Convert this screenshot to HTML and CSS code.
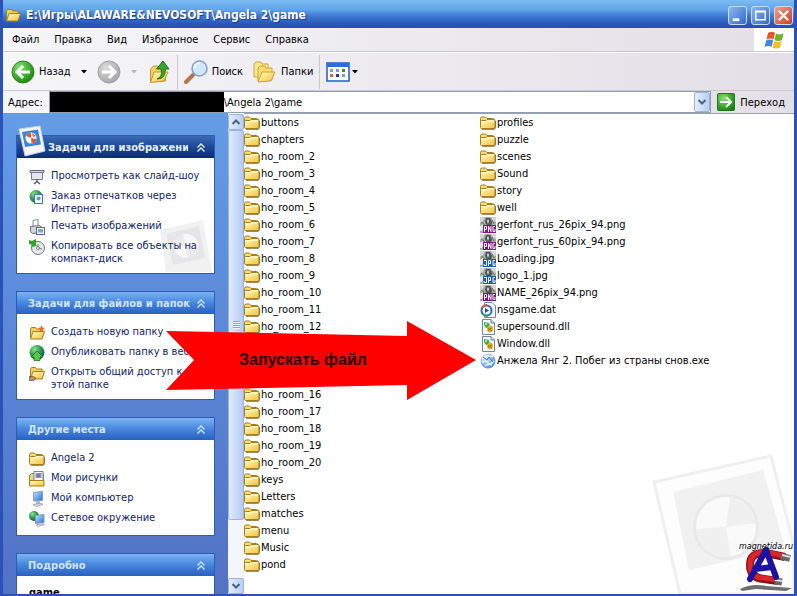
FILE: index.html
```
<!DOCTYPE html>
<html lang="ru">
<head>
  <meta charset="UTF-8">
  <title>E:\Игры\ALAWARE&amp;NEVOSOFT\Angela 2\game</title>
  <link rel="stylesheet" href="styles.css">
</head>
<body>
  <!-- shared icons -->
  <svg class="sprite" aria-hidden="true">
    <defs>
      <linearGradient id="gFolder" x1="0" y1="0" x2="1" y2="1">
        <stop offset="0" stop-color="#fffbc0"/><stop offset="1" stop-color="#efc33c"/>
      </linearGradient>
      <linearGradient id="gScreen" x1="0" y1="0" x2="1" y2="1">
        <stop offset="0" stop-color="#bfe6ff"/><stop offset="1" stop-color="#1e6fd6"/>
      </linearGradient>
      <radialGradient id="gGlobe" cx="0.35" cy="0.3" r="0.8">
        <stop offset="0" stop-color="#8fe08a"/><stop offset="0.5" stop-color="#2b9a4a"/><stop offset="1" stop-color="#0c4a7a"/>
      </radialGradient>
      <radialGradient id="gGreen" cx="0.35" cy="0.3" r="0.8">
        <stop offset="0" stop-color="#8be07a"/><stop offset="0.6" stop-color="#36a828"/><stop offset="1" stop-color="#1b7a14"/>
      </radialGradient>
      <radialGradient id="gGray" cx="0.35" cy="0.3" r="0.8">
        <stop offset="0" stop-color="#dcdcdc"/><stop offset="1" stop-color="#a2a2a2"/>
      </radialGradient>
      <radialGradient id="gBall" cx="0.35" cy="0.3" r="0.8">
        <stop offset="0" stop-color="#e4f4ff"/><stop offset="1" stop-color="#3f83dc"/>
      </radialGradient>
    </defs>
    <symbol id="folder" viewBox="0 0 16 16">
      <path d="M.5 12V3.500q0-1.500 1.500-1.500h3.500l1.500 1.500h5.500q1.500 0 1.500 1.500v7" fill="#f7dc74" stroke="#a87d1c"/>
      <path d="M1.500 13.500q-1 0-1-1V6.500q0-1 1-1H6l1-1h7q1 0 1 1v6.500q0 1.500-1 1.500z" fill="url(#gFolder)" stroke="#a87d1c"/>
      <path d="M2 7h4.500l1-1H14" fill="none" stroke="#fffde0"/>
      <path d="M2 14.500h12q1.500-.5 1.500-2V6" fill="none" stroke="#7a5a14" stroke-opacity=".7"/>
    </symbol>
    <symbol id="folder-open" viewBox="0 0 16 16">
      <path d="M1.500 13.500V4l1-1.500h4l1 1.500h5.500v9.500z" fill="#f3d262" stroke="#a87d1c"/>
      <path d="M1.500 14l2.500-7.500h11.500l-2.500 7.500z" fill="url(#gFolder)" stroke="#a87d1c"/>
    </symbol>
    <symbol id="folder-new" viewBox="0 0 16 16">
      <use href="#folder-open"/>
      <path d="M12.500 0l1 2.500 2.500.5-2 1.500.5 2.500-2-1.500-2 1.500.5-2.500-2-1.500 2.500-.5z" fill="#f0682a"/>
    </symbol>
    <symbol id="folder-share" viewBox="0 0 16 16">
      <use href="#folder-open"/>
      <path d="M0 11.500h4l3 1.500-2 2.500H0z" fill="#c98a5a" stroke="#5a4a4a" stroke-width=".6"/>
    </symbol>
    <symbol id="photo-file" viewBox="0 0 16 16">
      <rect width="16" height="16" fill="#a9aaa8"/>
      <path d="M0 0h5l-2 4-3 2zM11 0h5v5l-3-1z" fill="#d4d6d2"/>
      <path d="M6 1h4l2 4-1 4H7L5 5z" fill="#4d5252"/>
      <path d="M8 2l1 2-1 3-1-3zM0 9l3-2 1 3-2 4H0z" fill="#e6e8e4"/>
      <path d="M1 5l3 2v3M12 3l2 4" stroke="#6b706c" fill="none"/>
    </symbol>
    <symbol id="png" viewBox="0 0 16 16">
      <use href="#photo-file"/>
      <rect x="3" y="8" width="13" height="8" fill="#84128c"/>
      <path d="M4.500 15V9.500h2v3h-2M8.500 15V9.500l2.500 5V9M15 9.500h-2v5h2V12" fill="none" stroke="#fff"/>
    </symbol>
    <symbol id="jpg" viewBox="0 0 16 16">
      <use href="#photo-file"/>
      <rect x="3" y="8" width="13" height="8" fill="#1260b4"/>
      <path d="M4 9.500h2.500v5H4V13M8.500 15V9.500h2v3h-2M15 9.500h-2v5h2V12" fill="none" stroke="#fff"/>
    </symbol>
    <symbol id="dat" viewBox="0 0 16 16">
      <path d="M4.500.5H12l3.500 3.500v11.500h-11z" fill="#f4f7fc" stroke="#6d86ac"/>
      <circle cx="6.500" cy="8.500" r="5" fill="#fff" stroke="#2b67c8" stroke-width="2"/>
      <path d="M2 6a5 5 0 0 1 5-3" fill="none" stroke="#e05a2a" stroke-width="2"/>
      <path d="M3 12a5 5 0 0 0 5 1.500" fill="none" stroke="#3fa83a" stroke-width="2"/>
      <path d="M5 6l4 2.500L5 11z" fill="#1a4fa8"/>
    </symbol>
    <symbol id="dll" viewBox="0 0 16 16">
      <path d="M2.500.5H11l3.500 3.500v11.500h-12z" fill="#f6f9ff" stroke="#6d86ac"/>
      <path d="M11 .5V4h3.500" fill="#c8d6ee" stroke="#6d86ac"/>
      <path d="M4 3l5 1 1 4-4 1-2-3z" fill="#3fae4a"/>
      <circle cx="6" cy="5" r="1" fill="#c8f0b8"/>
      <ellipse cx="10" cy="10" rx="3" ry="3.500" fill="#e2b126"/>
      <path d="M8 9l4 3M8 11.500l4-3" stroke="#8a6a14" stroke-width=".8"/>
    </symbol>
    <symbol id="exe" viewBox="0 0 16 16">
      <circle cx="8" cy="8" r="7.500" fill="url(#gBall)"/>
      <path d="M2 6q3-4 6-3t5 0M2 9q4-2 6 1t6-2M5 13q3-3 7-1" fill="none" stroke="#fff" stroke-width="1.500" stroke-opacity=".8"/>
      <path d="M3 4l4 3 2-3 4 5" fill="none" stroke="#2f76cf"/>
    </symbol>
    <symbol id="slideshow" viewBox="0 0 16 16">
      <path d="M1 1.500h14v2H1z" fill="#d4d4de" stroke="#6a6a80"/>
      <path d="M2.500 3.500h11v7h-11z" fill="#e4e6f2" stroke="#7a7a90"/>
      <path d="M8 10v3M5 15l3-2.500L11 15" fill="none" stroke="#5c5c70" stroke-width="1.500"/>
    </symbol>
    <symbol id="globe-print" viewBox="0 0 16 16">
      <circle cx="7" cy="7.500" r="6.500" fill="url(#gGlobe)"/>
      <rect x="5.500" y="5.500" width="8" height="9" fill="#f4f8ff" stroke="#4a78b4"/>
      <circle cx="9.500" cy="9.500" r="2" fill="#5a98dc"/>
    </symbol>
    <symbol id="printer" viewBox="0 0 16 16">
      <path d="M4 7V1.500l5-1V7" fill="#fff" stroke="#7f8ba0"/>
      <path d="M1.500 7.500l9-1 2 2v5l-9 1-2-2z" fill="#d0d6de" stroke="#66708a"/>
      <rect x="7.500" y="8.500" width="8" height="7" fill="#fff" stroke="#4a6ea8"/>
      <rect x="9" y="10" width="5" height="3.500" fill="#76a8dc"/>
    </symbol>
    <symbol id="cd-copy" viewBox="0 0 16 16">
      <circle cx="9" cy="9" r="6.500" fill="#e3e7ea" stroke="#74787c"/>
      <path d="M9 9V5M9 9l4 1" stroke="#74787c"/>
      <circle cx="9" cy="9" r="1.500" fill="#fff" stroke="#74787c"/>
      <path d="M0 1l3 1 4-2v6l1 1-6 1 1-2-3-1z" fill="#2fa82a"/>
    </symbol>
    <symbol id="publish" viewBox="0 0 16 16">
      <circle cx="8" cy="7.500" r="7.500" fill="url(#gGlobe)"/>
      <path d="M8 6l6 6h-3v3.500H5V12H2z" fill="#57c84a" stroke="#166016" stroke-width=".7"/>
    </symbol>
    <symbol id="my-pics" viewBox="0 0 16 16">
      <path d="M.5 14.500V4.500l2-2h12v12z" fill="#f5d56a" stroke="#a87d1c"/>
      <rect x="5" y=".5" width="9" height="9" fill="#fff" stroke="#6a88b8"/>
      <rect x="6.500" y="2" width="6" height="5" fill="#62a4ea"/>
      <circle cx="9.500" cy="4.500" r="1.500" fill="#e0522a"/>
      <path d="M.5 9.500h14.500v5.500H.5z" fill="url(#gFolder)" stroke="#a87d1c"/>
    </symbol>
    <symbol id="computer" viewBox="0 0 16 16">
      <path d="M4.500 1.500l9-1v9l-9 .5z" fill="url(#gScreen)" stroke="#8a9ab8"/>
      <path d="M7 10h4v3H7z" fill="#b4bccc"/>
      <path d="M4 13.500l8-1 2 1-7 2z" fill="#dde2ec" stroke="#8a94a8" stroke-width=".7"/>
    </symbol>
    <symbol id="network" viewBox="0 0 16 16">
      <circle cx="5" cy="5" r="5" fill="url(#gGlobe)"/>
      <path d="M6.500 4.500l8.500-1v8l-8.500 1z" fill="url(#gScreen)" stroke="#8a9ab8"/>
      <path d="M7 14l7-1.500 1.500 1-6 2z" fill="#dde2ec" stroke="#8a94a8" stroke-width=".7"/>
    </symbol>
    <symbol id="chevrons" viewBox="0 0 10 10">
      <path d="M1.500 4.500L5 1l3.500 3.500M1.500 8.500L5 5l3.500 3.500" fill="none" stroke="currentColor" stroke-width="1.300"/>
    </symbol>
    <symbol id="chev-up" viewBox="0 0 10 10">
      <path d="M1.500 7L5 3.500 8.500 7" fill="none" stroke="#4d6185" stroke-width="2"/>
    </symbol>
    <symbol id="chev-down" viewBox="0 0 10 10">
      <path d="M1.500 3L5 6.500 8.500 3" fill="none" stroke="#4d6185" stroke-width="2"/>
    </symbol>
  </svg>

  <div class="window">
    <header class="titlebar">
      <svg class="icon"><use href="#folder-open"/></svg>
      <h1>E:\Игры\ALAWARE&amp;NEVOSOFT\Angela 2\game</h1>
      <div class="window-buttons">
        <button type="button" aria-label="Свернуть">
          <svg viewBox="0 0 18 18"><path d="M4 12h7v3H4z" fill="#fff"/></svg>
        </button>
        <button type="button" aria-label="Развернуть">
          <svg viewBox="0 0 18 18"><path d="M4 4.500h10v9H4zM3.500 5h11" fill="none" stroke="#fff" stroke-width="1.500"/></svg>
        </button>
        <button type="button" class="close" aria-label="Закрыть">
          <svg viewBox="0 0 18 18"><path d="M4 4l10 10M14 4L4 14" stroke="#fff" stroke-width="2.200"/></svg>
        </button>
      </div>
    </header>

    <nav class="menubar">
      <button type="button">Файл</button>
      <button type="button">Правка</button>
      <button type="button">Вид</button>
      <button type="button">Избранное</button>
      <button type="button">Сервис</button>
      <button type="button">Справка</button>
      <div class="flag">
        <svg viewBox="0 0 20 18">
          <path d="M4 2q4-2.500 7 0L9.500 8.500q-3-2-7 0z" fill="#e8542a"/>
          <path d="M12 2.500q3 2 7.500 0L18 9q-4 2-7.500 0z" fill="#6cb42c"/>
          <path d="M2.200 9.500q4-2 7 0L7.500 16q-3-2-7 0z" fill="#3f86dc"/>
          <path d="M10.200 10q3 2 7.500 0L16 16.500q-4 2-7.500 0z" fill="#f4bd20"/>
        </svg>
      </div>
    </nav>

    <div class="toolbar">
      <button type="button">
        <svg class="big" viewBox="0 0 24 24">
          <circle cx="12" cy="12" r="11" fill="url(#gGreen)" stroke="#2a8a20"/>
          <path d="M19 12H7M12 6l-6 6 6 6" fill="none" stroke="#fff" stroke-width="3"/>
        </svg>
        Назад
      </button>
      <button type="button" class="drop" aria-label="Журнал назад"><svg viewBox="0 0 6 4"><path d="M0 0h6L3 3.500z"/></svg></button>
      <button type="button" aria-label="Вперёд">
        <svg class="big" viewBox="0 0 24 24">
          <circle cx="12" cy="12" r="11" fill="url(#gGray)" stroke="#a0a0a0"/>
          <path d="M5 12h12M12 6l6 6-6 6" fill="none" stroke="#fff" stroke-width="3"/>
        </svg>
      </button>
      <button type="button" class="drop dim" aria-label="Журнал вперёд"><svg viewBox="0 0 6 4"><path d="M0 0h6L3 3.500z"/></svg></button>
      <button type="button" aria-label="Вверх">
        <svg class="big" viewBox="0 0 24 24">
          <path d="M3.500 22V9l3-3h4l2 2h6v13z" fill="#f3d262" stroke="#c49a2c"/>
          <path d="M3.500 22.500L7 12h14l-4 9z" fill="url(#gFolder)" stroke="#c49a2c"/>
          <path d="M10 19q6-2 4-10H9.500L16 1l6 8h-4q1 10-8 10z" fill="#3aa432" stroke="#1c7016"/>
        </svg>
      </button>
      <span class="divider"></span>
      <button type="button">
        <svg class="big" viewBox="0 0 24 24">
          <path d="M9 15l-7 7" stroke="#b8764a" stroke-width="4" stroke-linecap="round"/>
          <circle cx="15.500" cy="8.500" r="7.500" fill="#cfe9fb" stroke="#7f9fcb" stroke-width="1.500"/>
          <path d="M10.500 8a5 5 0 0 1 5-5" fill="none" stroke="#fff" stroke-width="2"/>
        </svg>
        Поиск
      </button>
      <button type="button" class="folders">
        <svg class="big" viewBox="0 0 24 24">
          <path d="M1 17V4l2-2h5l1 2h6v13z" fill="#fbe68e" stroke="#cfa334"/>
          <path d="M5 21V8l2-2h5l1 2h6v12z" fill="#f8dc74" stroke="#cfa334"/>
          <path d="M5 22l4-10h13l-4 9z" fill="url(#gFolder)" stroke="#cfa334"/>
        </svg>
        Папки
      </button>
      <span class="divider"></span>
      <button type="button" class="views" aria-label="Вид">
        <svg class="big" viewBox="0 0 24 20">
          <path d="M1 1h22v18H1z" fill="#fff" stroke="#1c5cc4" stroke-width="1.500"/>
          <path d="M1 1h22v4H1z" fill="#2a70dc"/>
          <path d="M4 7h3v3H4zM16 12h3v3h-3z" fill="#8a98b0"/>
          <path d="M10 7h3v3h-3z" fill="#7c9cd0"/>
          <path d="M16 7h3v3h-3z" fill="#2c9a34"/>
          <path d="M4 12h3v3H4z" fill="#dc6a34"/>
          <path d="M10 12h3v3h-3z" fill="#1c3ca0"/>
        </svg>
        <svg class="caret" viewBox="0 0 6 4"><path d="M0 0h6L3 3.500z"/></svg>
      </button>
    </div>

    <form class="address">
      <label for="path">Адрес:</label>
      <div class="combo">
        <span class="mask"></span>
        <input type="text" id="path" value="\Angela 2\game">
        <button type="button" class="scroll-btn" aria-label="Список адресов"><svg><use href="#chev-down"/></svg></button>
      </div>
      <button type="button" class="go">
        <svg viewBox="0 0 18 18">
          <rect x=".5" y=".5" width="17" height="17" rx="1" fill="url(#gGreen)" stroke="#1d7a1a"/>
          <path d="M3 9h10M9 4l5 5-5 5" fill="none" stroke="#fff" stroke-width="2"/>
        </svg>
        Переход
      </button>
    </form>

    <main class="content">
      <aside class="sidebar">
        <section class="panel primary">
          <svg class="polaroid" viewBox="0 0 28 32">
            <path d="M1 4l21-3 5 25-20 5z" fill="#f4f6fa" stroke="#c8d0e0"/>
            <path d="M4 7l16-2.500 3 15L7 22z" fill="#3a86d4"/>
            <circle cx="13" cy="13" r="5.500" fill="#fff"/>
            <path d="M13 13l-5-2a5.500 5.500 0 0 1 5-3.500zM13 13l5.500 1a5.500 5.500 0 0 1-5 4.500zM14 8l4 3-3 1z" fill="#e25a34"/>
          </svg>
          <h2><span>Задачи для изображений</span><svg><use href="#chevrons"/></svg></h2>
          <ul>
            <li><svg class="icon"><use href="#slideshow"/></svg><a href="#">Просмотреть как слайд-шоу</a></li>
            <li><svg class="icon"><use href="#globe-print"/></svg><a href="#">Заказ отпечатков через Интернет</a></li>
            <li><svg class="icon"><use href="#printer"/></svg><a href="#">Печать изображений</a></li>
            <li><svg class="icon"><use href="#cd-copy"/></svg><a href="#">Копировать все объекты на компакт-диск</a></li>
          </ul>
          <svg class="ghost" viewBox="0 0 54 54">
            <path d="M1 11L44 1l9 52H7z" fill="#f1f1f2"/>
            <path d="M7 15l33-8 6 32-32 7z" fill="#e6e6e8"/>
            <circle cx="27" cy="27" r="12" fill="#f8f8f9"/>
            <path d="M27 27l-12-1a12 12 0 0 1 9-11zM27 27l12 2a12 12 0 0 1-10 10z" fill="#eaeaec"/>
          </svg>
        </section>

        <section class="panel">
          <h2><span>Задачи для файлов и папок</span><svg><use href="#chevrons"/></svg></h2>
          <ul>
            <li><svg class="icon"><use href="#folder-new"/></svg><a href="#">Создать новую папку</a></li>
            <li><svg class="icon"><use href="#publish"/></svg><a href="#">Опубликовать папку в вебе</a></li>
            <li><svg class="icon"><use href="#folder-share"/></svg><a href="#">Открыть общий доступ к этой папке</a></li>
          </ul>
        </section>

        <section class="panel">
          <h2><span>Другие места</span><svg><use href="#chevrons"/></svg></h2>
          <ul>
            <li><svg class="icon"><use href="#folder"/></svg><a href="#">Angela 2</a></li>
            <li><svg class="icon"><use href="#my-pics"/></svg><a href="#">Мои рисунки</a></li>
            <li><svg class="icon"><use href="#computer"/></svg><a href="#">Мой компьютер</a></li>
            <li><svg class="icon"><use href="#network"/></svg><a href="#">Сетевое окружение</a></li>
          </ul>
        </section>

        <section class="panel">
          <h2><span>Подробно</span><svg><use href="#chevrons"/></svg></h2>
          <p class="details">game</p>
        </section>
      </aside>

      <div class="scrollbar">
        <button type="button" class="scroll-btn" aria-label="Вверх"><svg><use href="#chev-up"/></svg></button>
        <div class="track"><div class="thumb"><span class="grip"></span></div></div>
        <button type="button" class="scroll-btn" aria-label="Вниз"><svg><use href="#chev-down"/></svg></button>
      </div>

      <div class="files">
        <ul>
          <li><svg class="icon"><use href="#folder"/></svg>buttons</li>
          <li><svg class="icon"><use href="#folder"/></svg>chapters</li>
          <li><svg class="icon"><use href="#folder"/></svg>ho_room_2</li>
          <li><svg class="icon"><use href="#folder"/></svg>ho_room_3</li>
          <li><svg class="icon"><use href="#folder"/></svg>ho_room_4</li>
          <li><svg class="icon"><use href="#folder"/></svg>ho_room_5</li>
          <li><svg class="icon"><use href="#folder"/></svg>ho_room_6</li>
          <li><svg class="icon"><use href="#folder"/></svg>ho_room_7</li>
          <li><svg class="icon"><use href="#folder"/></svg>ho_room_8</li>
          <li><svg class="icon"><use href="#folder"/></svg>ho_room_9</li>
          <li><svg class="icon"><use href="#folder"/></svg>ho_room_10</li>
          <li><svg class="icon"><use href="#folder"/></svg>ho_room_11</li>
          <li><svg class="icon"><use href="#folder"/></svg>ho_room_12</li>
          <li><svg class="icon"><use href="#folder"/></svg>ho_room_13</li>
          <li><svg class="icon"><use href="#folder"/></svg>ho_room_14</li>
          <li><svg class="icon"><use href="#folder"/></svg>ho_room_15</li>
          <li><svg class="icon"><use href="#folder"/></svg>ho_room_16</li>
          <li><svg class="icon"><use href="#folder"/></svg>ho_room_17</li>
          <li><svg class="icon"><use href="#folder"/></svg>ho_room_18</li>
          <li><svg class="icon"><use href="#folder"/></svg>ho_room_19</li>
          <li><svg class="icon"><use href="#folder"/></svg>ho_room_20</li>
          <li><svg class="icon"><use href="#folder"/></svg>keys</li>
          <li><svg class="icon"><use href="#folder"/></svg>Letters</li>
          <li><svg class="icon"><use href="#folder"/></svg>matches</li>
          <li><svg class="icon"><use href="#folder"/></svg>menu</li>
          <li><svg class="icon"><use href="#folder"/></svg>Music</li>
          <li><svg class="icon"><use href="#folder"/></svg>pond</li>
        </ul>
        <ul>
          <li><svg class="icon"><use href="#folder"/></svg>profiles</li>
          <li><svg class="icon"><use href="#folder"/></svg>puzzle</li>
          <li><svg class="icon"><use href="#folder"/></svg>scenes</li>
          <li><svg class="icon"><use href="#folder"/></svg>Sound</li>
          <li><svg class="icon"><use href="#folder"/></svg>story</li>
          <li><svg class="icon"><use href="#folder"/></svg>well</li>
          <li><svg class="icon"><use href="#png"/></svg>gerfont_rus_26pix_94.png</li>
          <li><svg class="icon"><use href="#png"/></svg>gerfont_rus_60pix_94.png</li>
          <li><svg class="icon"><use href="#jpg"/></svg>Loading.jpg</li>
          <li><svg class="icon"><use href="#jpg"/></svg>logo_1.jpg</li>
          <li><svg class="icon"><use href="#png"/></svg>NAME_26pix_94.png</li>
          <li><svg class="icon"><use href="#dat"/></svg>nsgame.dat</li>
          <li><svg class="icon"><use href="#dll"/></svg>supersound.dll</li>
          <li><svg class="icon"><use href="#dll"/></svg>Window.dll</li>
          <li><svg class="icon"><use href="#exe"/></svg>Анжела Янг 2. Побег из страны снов.exe</li>
        </ul>

        <svg class="watermark" viewBox="0 0 142 140">
          <path d="M2 28L119 2l23 90v48H28z" fill="#fdfdfd" stroke="#efefef" stroke-width="3"/>
          <path d="M21 38l90-22 22 78-96 22z" fill="#f1f1f1"/>
          <circle cx="74" cy="73" r="33" fill="#e9e9e9"/>
          <circle cx="74" cy="73" r="30" fill="#fafafa"/>
          <path d="M74 73l-30 2a30 30 0 0 0 35 28zM74 73l4-30a30 30 0 0 1 26 26z" fill="#f0f0f0"/>
        </svg>
        <svg class="magnet" viewBox="0 0 54 50">
          <path d="M0 45q12-6 26-3l26 2-6 3-30-2-14 2z" fill="#222" fill-opacity=".65"/>
          <path d="M45 13L26 9Q10 8 10 21t14 14l14 2" fill="none" stroke="#8c1016" stroke-width="8"/>
          <path d="M44 12L26 8Q10 8 10 21t14 13l13 2" fill="none" stroke="#d8262a" stroke-width="5"/>
          <path d="M41 12l9 2.500M35 37l7 1" stroke="#666" stroke-width="7"/>
          <path d="M42 11l8 2M35 36l7 1" stroke="#d8d8d8" stroke-width="2"/>
          <path d="M10 35L26 6l10 27M15 25l17-2" fill="none" stroke="#1c10a0" stroke-width="6" stroke-linecap="round" stroke-linejoin="round"/>
          <text x="53" y="5" text-anchor="end">magnetida.ru</text>
        </svg>
      </div>
    </main>

    <svg class="callout" viewBox="0 0 310 80">
      <path d="M0 10l241 5V0l69 39-69 40V64L0 69l28-30z" fill="#f00"/>
      <text x="73" y="44">Запускать файл</text>
    </svg>
  </div>
</body>
</html>
```
FILE: styles.css
```
* {
  box-sizing: border-box;
}

body {
  margin: 0;
  font-family: "DejaVu Sans Condensed", "Noto Sans", sans-serif;
  font-size: 11px;
  line-height: 13px;
  color: #000;
}

ul {
  list-style: none;
  margin: 0;
  padding: 0;
}

button {
  display: flex;
  align-items: center;
  padding: 0;
  border: 0;
  background: none;
  font: inherit;
  color: inherit;
}

svg {
  display: block;
  flex: none;
}

.sprite {
  position: absolute;
  width: 0;
  height: 0;
}

.icon {
  width: 16px;
  height: 16px;
}

.window {
  position: relative;
  display: flex;
  flex-direction: column;
  height: 100vh;
  overflow: hidden;
  border: solid #2a52b8;
  border-width: 0 3px 2px;
  background-color: #ece9ee;
}

/* title bar */
.titlebar {
  display: flex;
  align-items: center;
  gap: 5px;
  height: 28px;
  padding: 2px 4px 0 5px;
  margin: 0 -3px;
  background: linear-gradient(#7dbcf2, #60a4ea 35%, #3f7cd6 55%, #2a58b8 85%, #2450ae);
}

.titlebar h1 {
  flex: 1;
  margin: 0;
  font-size: 12px;
  line-height: 18px;
  color: #fff;
  text-shadow: 1px 1px 1px #1a3c88;
}

.window-buttons {
  display: flex;
  gap: 4px;
}

.window-buttons button {
  width: 19px;
  height: 19px;
  border: 1px solid #c8dcf8;
  border-radius: 3px;
  background: linear-gradient(135deg, #8ab8f0, #3468c8);
}

.window-buttons .close {
  background: linear-gradient(135deg, #f0a088, #d03c20);
}

/* menu */
.menubar {
  display: flex;
  align-items: center;
  gap: 15px;
  height: 24px;
  padding-left: 9px;
  background: linear-gradient(to right, #f6f5f8, #e2e0e6);
  border-bottom: 1px solid #c9c7cf;
}

.flag {
  display: flex;
  align-items: center;
  justify-content: center;
  width: 40px;
  height: 23px;
  margin-left: auto;
  background-color: #fff;
}

.flag svg {
  width: 20px;
  height: 18px;
}

/* toolbar */
.toolbar {
  display: flex;
  align-items: center;
  height: 39px;
  padding-left: 8px;
  background: linear-gradient(to right, #f6f5f8, #e2e0e6);
  border-top: 1px solid #fff;
  border-bottom: 1px solid #c9c7cf;
}

.toolbar button {
  gap: 4px;
}

.toolbar .big {
  width: 24px;
  height: 24px;
}

.toolbar .drop {
  justify-content: center;
  width: 26px;
}

.drop svg,
.caret {
  width: 6px;
  height: 4px;
}

.toolbar .dim {
  fill: #b8b8b8;
}

.toolbar .views {
  gap: 2px;
}

.divider {
  width: 1px;
  height: 34px;
  margin: 0 6px;
  background-color: #c9c7cf;
}

.folders {
  margin-left: 10px;
}

/* address */
.address {
  display: flex;
  align-items: center;
  gap: 6px;
  height: 22px;
  padding-left: 5px;
  background: linear-gradient(to right, #f6f5f8, #e2e0e6);
}

.combo {
  flex: 1;
  display: flex;
  height: 22px;
  background-color: #fff;
  border: 1px solid #8f9db5;
}

.mask {
  width: 174px;
  background-color: #000;
}

.combo input {
  flex: 1;
  min-width: 0;
  padding: 0;
  border: 0;
  outline: 0;
  font: inherit;
  background: none;
}

.scroll-btn {
  flex: none;
  justify-content: center;
  width: 16px;
  height: 16px;
  border: 1px solid #9cb4dc;
  border-radius: 2px;
  background: linear-gradient(to right, #e4eefc, #b8cff4);
}

.scroll-btn svg {
  width: 10px;
  height: 10px;
}

.combo .scroll-btn {
  height: 20px;
}

.go {
  gap: 5px;
  padding-right: 9px;
}

.go svg {
  width: 18px;
  height: 18px;
}

/* content */
.content {
  flex: 1;
  display: flex;
  min-height: 0;
  background-color: #fff;
}

.sidebar {
  display: flex;
  flex-direction: column;
  flex: none;
  gap: 17px;
  width: 225px;
  padding: 22px 13px 0;
  overflow: hidden;
  background: linear-gradient(#649ce6, #5a86d6 50%, #5272c4);
}

.panel {
  position: relative;
  flex: none;
  background-color: #fff;
  border: 1px solid #2c5cb4;
}

.panel h2 {
  display: flex;
  align-items: center;
  height: 22px;
  margin: 0;
  padding: 1px 8px 0 11px;
  font-size: 11px;
  color: #d0e4ff;
  background: linear-gradient(#7cb4f0, #4a8ae0 45%, #2860c0);
}

.panel h2 span {
  flex: 1;
  overflow: hidden;
  white-space: nowrap;
}

.panel h2 svg {
  width: 10px;
  height: 10px;
}

.panel.primary h2 {
  gap: 8px;
  padding-left: 31px;
  color: #e6f0ff;
  background: linear-gradient(#3a6cb4, #1c4898 50%, #0c2c78);
}

.panel ul {
  display: flex;
  flex-direction: column;
  gap: 4px;
  padding: 11px 8px 8px 12px;
}

.panel li {
  position: relative;
  z-index: 1;
  display: flex;
  gap: 6px;
}

.panel a {
  color: #10246e;
  text-decoration: none;
}

.polaroid {
  position: absolute;
  left: 1px;
  top: -11px;
  width: 28px;
  height: 32px;
}

.ghost {
  position: absolute;
  right: 1px;
  bottom: 0;
  width: 54px;
  height: 54px;
}

.details {
  margin: 0;
  padding: 10px 12px;
  font-weight: bold;
}

/* scrollbar */
.scrollbar {
  display: flex;
  flex-direction: column;
  flex: none;
  width: 16px;
  padding-top: 1px;
  background-color: #f4f6fc;
}

.track {
  flex: 1;
}

.thumb {
  display: flex;
  align-items: center;
  justify-content: center;
  height: 87%;
  border: 1px solid #9cb4dc;
  border-radius: 2px;
  background: linear-gradient(to right, #e0ebfc, #b4ccf2);
}

.grip {
  width: 7px;
  height: 8px;
  background: repeating-linear-gradient(#8ca4d0 0 1px, #eef4ff 1px 2px);
}

/* file list */
.files {
  position: relative;
  flex: 1;
  display: flex;
  overflow: hidden;
  border-top: 1px solid #a0a0a8;
}

.files ul {
  position: relative;
  z-index: 1;
  width: 236px;
}

.files li {
  display: flex;
  align-items: center;
  gap: 1px;
  height: 17px;
  white-space: nowrap;
}

.watermark {
  position: absolute;
  right: 0;
  bottom: 0;
  width: 142px;
  height: 140px;
}

.magnet {
  position: absolute;
  right: 0;
  bottom: 0;
  width: 54px;
  height: 50px;
  overflow: visible;
}

.magnet text {
  font: italic 8px "DejaVu Sans", sans-serif;
}

/* arrow over the list */
.callout {
  position: absolute;
  z-index: 2;
  left: 163px;
  top: 321px;
  width: 310px;
  height: 80px;
}

.callout text {
  font: bold 16px "Liberation Sans", Arial, sans-serif;
  fill: #200;
}
```
